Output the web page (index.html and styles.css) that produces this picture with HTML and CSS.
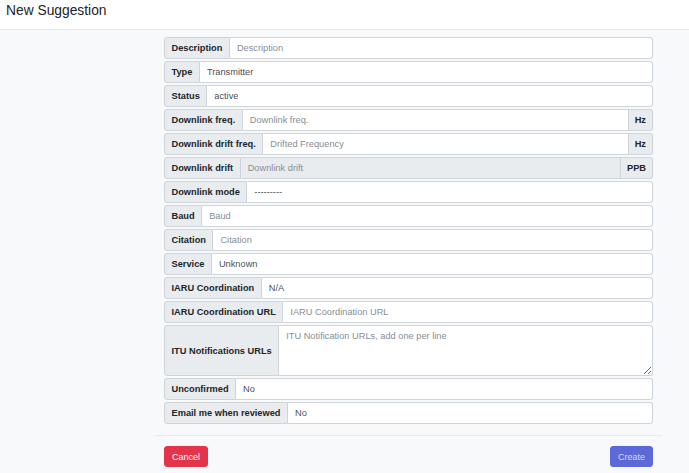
FILE: index.html
```html
<!DOCTYPE html>
<html lang="en">
<head>
	<meta charset="UTF-8">
	<title>New Suggestion</title>
	<link rel="stylesheet" href="styles.css">
</head>
<body>
<div class="header">
	<h1>New Suggestion</h1>
</div>

<div class="main">
	<form class="form">
		<div class="group">
			<span class="addon">Description</span>
			<input class="control" type="text" placeholder="Description">
		</div>
		<div class="group">
			<span class="addon">Type</span>
			<select class="control">
				<option>Transmitter</option>
			</select>
		</div>
		<div class="group">
			<span class="addon">Status</span>
			<select class="control">
				<option>active</option>
			</select>
		</div>
		<div class="group">
			<span class="addon">Downlink freq.</span>
			<input class="control" type="text" placeholder="Downlink freq.">
			<span class="addon append">Hz</span>
		</div>
		<div class="group">
			<span class="addon">Downlink drift freq.</span>
			<input class="control" type="text" placeholder="Drifted Frequency">
			<span class="addon append">Hz</span>
		</div>
		<div class="group">
			<span class="addon">Downlink drift</span>
			<input class="control" type="text" placeholder="Downlink drift" disabled>
			<span class="addon append">PPB</span>
		</div>
		<div class="group">
			<span class="addon">Downlink mode</span>
			<select class="control">
				<option>---------</option>
			</select>
		</div>
		<div class="group">
			<span class="addon">Baud</span>
			<input class="control" type="text" placeholder="Baud">
		</div>
		<div class="group">
			<span class="addon">Citation</span>
			<input class="control" type="text" placeholder="Citation">
		</div>
		<div class="group">
			<span class="addon">Service</span>
			<select class="control">
				<option>Unknown</option>
			</select>
		</div>
		<div class="group">
			<span class="addon">IARU Coordination</span>
			<select class="control">
				<option>N/A</option>
			</select>
		</div>
		<div class="group">
			<span class="addon">IARU Coordination URL</span>
			<input class="control" type="text" placeholder="IARU Coordination URL">
		</div>
		<div class="group tall">
			<span class="addon">ITU Notifications URLs</span>
			<textarea class="control" placeholder="ITU Notification URLs, add one per line"></textarea>
		</div>
		<div class="group">
			<span class="addon">Unconfirmed</span>
			<select class="control">
				<option>No</option>
			</select>
		</div>
		<div class="group">
			<span class="addon">Email me when reviewed</span>
			<select class="control">
				<option>No</option>
			</select>
		</div>
	</form>

	<div class="footer">
		<button class="btn btn-danger" type="button">Cancel</button>
		<button class="btn btn-primary" type="button" disabled>Create</button>
	</div>
</div>
</body>
</html>
```

FILE: styles.css
```css
html, body {
    height: 100%;
}

body {
    margin: 0;
    font: 9.25px "Liberation Sans", Arial, sans-serif;
    color: #212529;
    background: #f8f9fa;
}

.header {
    height: 30px;
    background: #fff;
    border-bottom: 1px solid #e6e9ec;
    box-sizing: border-box;
}

.header h1 {
    margin: 0;
    padding: 2px 0 0 6px;
    font-size: 13.8px;
    font-weight: normal;
    line-height: 18px;
    color: #212529;
}

.main {
    padding-top: 7px;
}

.form {
    display: flex;
    flex-direction: column;
    gap: 2px;
    width: 489px;
    margin: 0 0 0 164px;
}

.group {
    display: flex;
    height: 22px;
}

.group.tall {
    height: 51px;
}

.addon {
    display: flex;
    align-items: center;
    padding: 0 6.5px;
    font-weight: bold;
    color: #212529;
    white-space: nowrap;
    background: #e9ecef;
    border: 1px solid #ced4da;
    border-radius: 3px 0 0 3px;
}

.addon.append {
    padding: 0 6px;
    border-left: none;
    border-radius: 0 3px 3px 0;
}

.control {
    flex: 1;
    min-width: 0;
    margin: 0;
    padding: 0 7px;
    font: inherit;
    color: #495057;
    background: #fff;
    border: 1px solid #ced4da;
    border-left: none;
    border-radius: 0 3px 3px 0;
    box-sizing: border-box;
    outline: none;
    -webkit-appearance: none;
    appearance: none;
}

.control:has(+ .append) {
    border-radius: 0;
}

.control::placeholder {
    color: #868e96;
}

.control:disabled {
    background: #e9ecef;
}

textarea.control {
    padding: 4px 7px;
    resize: vertical;
    line-height: 13px;
}

.footer {
    display: flex;
    justify-content: space-between;
    width: 507px;
    margin: 11px 0 0 155px;
    padding: 10px 9px 0;
    border-top: 1px solid #e9ecef;
    box-sizing: border-box;
}

.btn {
    height: 21px;
    padding: 0 7px;
    font: 9px "Liberation Sans", Arial, sans-serif;
    border: 1px solid transparent;
    border-radius: 3px;
}

.btn-danger {
    color: #fff;
    background: #e3344a;
    border-color: #e3344a;
}

.btn-primary {
    color: #d3d6f5;
    background: #5d69d8;
    border-color: #5d69d8;
}
```
